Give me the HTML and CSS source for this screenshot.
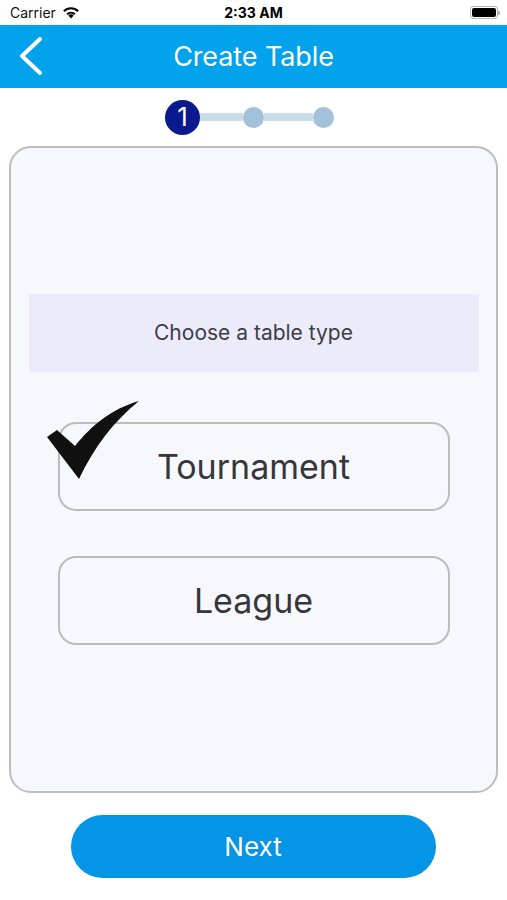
FILE: index.html
```html
<!DOCTYPE html>
<html lang="en">
<head>
<meta charset="utf-8">
<title>Create Table</title>
<link rel="stylesheet" href="styles.css">
</head>
<body>
<div class="screen">
  <div class="status">
    <div class="status-left">
      <span class="carrier">Carrier</span>
      <svg class="wifi" width="18" height="13" viewBox="0 0 18 13">
        <path d="M9 12.5 L6.3 9.6 A3.9 3.9 0 0 1 11.7 9.6 Z" fill="#000"/>
        <path d="M4.4 7.6 A6.6 6.6 0 0 1 13.6 7.6 L12.3 9 A4.8 4.8 0 0 0 5.7 9 Z" fill="#000"/>
        <path d="M1.2 4.4 A11 11 0 0 1 16.8 4.4 L15.4 5.9 A9 9 0 0 0 2.6 5.9 Z" fill="#000"/>
      </svg>
    </div>
    <span class="time">2:33 AM</span>
    <div class="status-right">
      <div class="battery"><div class="battery-fill"></div></div>
      <div class="battery-nub"></div>
    </div>
  </div>

  <div class="navbar">
    <svg class="back" width="24" height="40" viewBox="0 0 24 40">
      <path d="M21 2 L3 19 L21 36" fill="none" stroke="#fff" stroke-width="4" stroke-linecap="round" stroke-linejoin="round"/>
    </svg>
    <span class="title">Create Table</span>
  </div>

  <div class="stepper">
    <div class="step-active">1</div>
    <div class="seg seg-a"></div>
    <div class="step-dot"></div>
    <div class="seg seg-b"></div>
    <div class="step-dot"></div>
  </div>

  <div class="card">
    <div class="band">Choose a table type</div>
    <div class="options">
      <div class="option selected">
        <svg class="check" width="92" height="80" viewBox="0 0 92 80">
          <path d="M0 36 L10 29 L28 45 C44 25 64 8 92 0 C67 20 47 46 32 78 Z" fill="#111"/>
        </svg>
        <span>Tournament</span>
      </div>
      <div class="option"><span>League</span></div>
    </div>
  </div>

  <div class="footer">
    <div class="next">Next</div>
  </div>
</div>
</body>
</html>
```

FILE: styles.css
```css
html, body {
  margin: 0;
  padding: 0;
  background: #ffffff;
}
.screen {
  width: 507px;
  height: 900px;
  font-family: Inter, "Noto Sans", "Liberation Sans", sans-serif;
  display: flex;
  flex-direction: column;
}
.status {
  height: 25px;
  display: flex;
  align-items: center;
  justify-content: space-between;
  padding: 0 7px 0 10px;
  position: relative;
}
.status-left {
  display: flex;
  align-items: center;
  gap: 6px;
}
.carrier {
  font-size: 14px;
  color: #111;
}
.wifi { margin-top: -1px; }
.time {
  position: absolute;
  left: 0;
  right: 0;
  text-align: center;
  font-size: 14px;
  font-weight: 700;
  color: #000;
  pointer-events: none;
}
.status-right {
  display: flex;
  align-items: center;
}
.battery {
  width: 24px;
  height: 9px;
  border: 1.5px solid #b4b4b4;
  border-radius: 3px;
  padding: 1px;
  box-sizing: content-box;
}
.battery-fill {
  width: 100%;
  height: 100%;
  background: #000;
  border-radius: 2px;
}
.battery-nub {
  width: 2px;
  height: 4px;
  background: #b4b4b4;
  border-radius: 0 1px 1px 0;
}
.navbar {
  height: 63px;
  background: #02a3ec;
  display: flex;
  align-items: center;
  justify-content: center;
  position: relative;
}
.back {
  position: absolute;
  left: 19px;
  top: 12px;
}
.title {
  color: #ffffff;
  font-size: 27px;
  letter-spacing: -0.1px;
}
.stepper {
  height: 58px;
  display: flex;
  align-items: center;
  justify-content: center;
  padding-right: 8px;
}
.step-active {
  width: 35px;
  height: 35px;
  border-radius: 50%;
  background: #0a1a8e;
  color: #fff;
  font-size: 26px;
  display: flex;
  align-items: center;
  justify-content: center;
  line-height: 1;
}
.seg {
  height: 8px;
  background: #c9dce9;
}
.seg-a { width: 43px; }
.seg-b { width: 49px; }
.step-dot {
  width: 21px;
  height: 21px;
  border-radius: 50%;
  background: #a3c2da;
}
.card {
  margin: 0 9px;
  height: 647px;
  box-sizing: border-box;
  border: 2.5px solid #bdbdbd;
  border-radius: 22px;
  background: #f7f8fd;
  padding: 145.5px 17.5px 0 17.5px;
}
.band {
  height: 78px;
  background: #ecebfa;
  display: flex;
  align-items: center;
  justify-content: center;
  font-size: 21px;
  color: #3d3d47;
}
.options {
  display: flex;
  flex-direction: column;
  align-items: center;
  gap: 45px;
  margin-top: 50px;
}
.option {
  width: 392px;
  height: 89px;
  box-sizing: border-box;
  border: 2.5px solid #bcbcbc;
  border-radius: 18px;
  display: flex;
  align-items: center;
  justify-content: center;
  font-size: 34px;
  color: #36363b;
  position: relative;
}
.check {
  position: absolute;
  left: -13px;
  top: -23px;
}
.footer {
  display: flex;
  justify-content: center;
  padding-top: 22px;
  padding-right: 1px;
}
.next {
  width: 365px;
  height: 63px;
  border-radius: 32px;
  background: #0495e7;
  color: #fff;
  font-size: 26px;
  display: flex;
  align-items: center;
  justify-content: center;
}
```
